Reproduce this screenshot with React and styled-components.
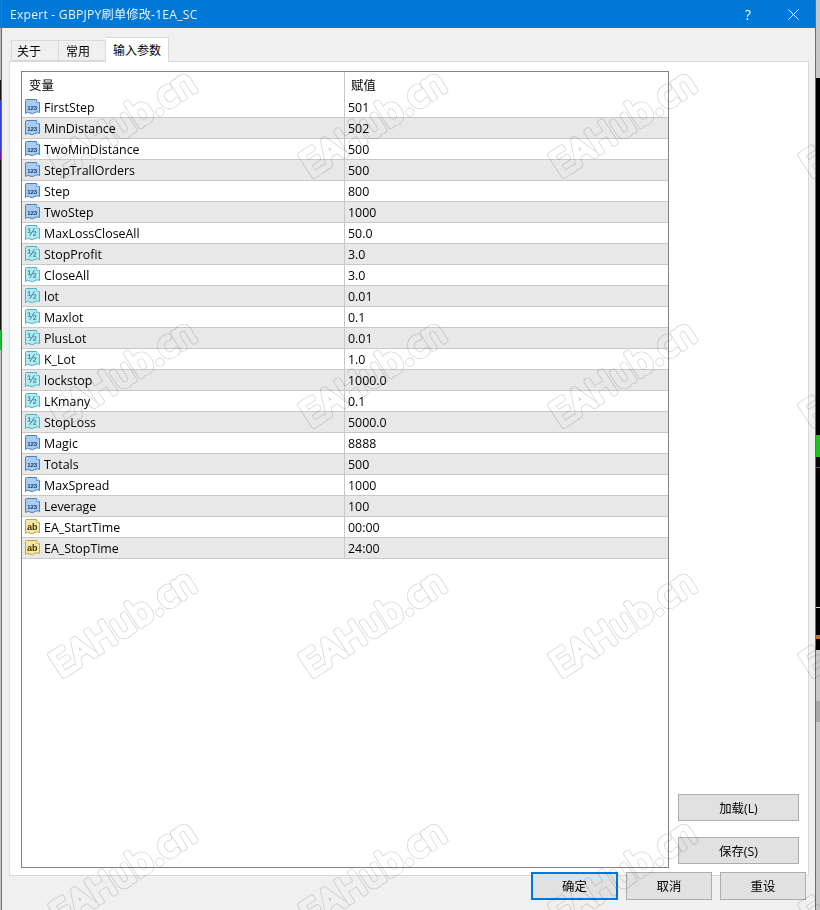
import React from 'react';
import styled, { createGlobalStyle } from 'styled-components';

const GlobalStyle = createGlobalStyle`
  html, body {
    margin: 0;
    padding: 0;
    width: 820px;
    height: 910px;
    overflow: hidden;
    background: #c8c8c8;
  }
  * {
    box-sizing: border-box;
  }
`;

const Screen = styled.div`
  position: relative;
  display: flex;
  width: 820px;
  height: 910px;
  overflow: hidden;
  font-family: "Open Sans", "Noto Sans CJK SC", sans-serif;
  font-size: 12.4px;
  color: #000;
`;

const LeftEdge = styled.div`
  width: 1px;
  flex: none;
  background: linear-gradient(
    #0078d7 0 28px,
    #b8b8b8 28px 80px,
    #111 80px 100px,
    #2b3fd0 100px 150px,
    #6a1fa0 150px 160px,
    #111 160px 330px,
    #18c030 330px 350px,
    #c8c8c8 350px
  );
`;

const Window = styled.div`
  width: 815px;
  flex: none;
  display: flex;
  flex-direction: column;
  background: #f0f0f0;
  border-left: 1px solid #2b7cc4;
  border-right: 1px solid #2b7cc4;
`;

const TitleBar = styled.div`
  height: 28px;
  flex: none;
  display: flex;
  align-items: center;
  padding-left: 8px;
  background: #0078d7;
  color: #e8f2fb;
  font-size: 12.2px;
`;

const Title = styled.span`
  flex: 1;
  letter-spacing: 0.2px;
`;

const Help = styled.span`
  width: 12px;
  margin-right: 34px;
  color: #fff;
  font-size: 14px;
  text-align: center;
`;

const CloseIcon = styled.svg`
  width: 11px;
  height: 11px;
  margin-right: 16px;
`;

const Body = styled.div`
  flex: 1;
  display: flex;
  flex-direction: column;
  padding: 9px 0 0 7px;
`;

const Tabs = styled.div`
  height: 24px;
  flex: none;
  display: flex;
  align-items: flex-end;
  padding-left: 2px;
  font-size: 12px;
`;

const Tab = styled.div`
  display: flex;
  align-items: center;
  width: ${p => p.$width}px;
  height: ${p => (p.$active ? 25 : 21)}px;
  margin-bottom: ${p => (p.$active ? -1 : 0)}px;
  padding-left: ${p => (p.$joined ? 7 : 5)}px;
  position: relative;
  z-index: ${p => (p.$active ? 1 : 0)};
  background: ${p => (p.$active ? '#fff' : '#f0f0f0')};
  border: 1px solid #d9d9d9;
  border-bottom: ${p => (p.$active ? 'none' : '1px solid #d9d9d9')};
  border-left: ${p => (p.$joined ? 'none' : '1px solid #d9d9d9')};
`;

const Panel = styled.div`
  width: 800px;
  height: 815px;
  flex: none;
  display: flex;
  gap: 9px;
  padding: 9px 9px 7px 11px;
  background: #fff;
  border: 1px solid #d9d9d9;
`;

const Grid = styled.div`
  width: 648px;
  flex: none;
  border: 1px solid #82828a;
`;

const Row = styled.div`
  display: grid;
  grid-template-columns: 323px 1fr;
  height: ${p => (p.$header ? 25 : 21)}px;
  background: ${p => (p.$shaded ? '#e8e8e8' : '#fff')};
  border-bottom: ${p => (p.$header ? 'none' : '1px solid #c8c8c8')};
`;

const NameCell = styled.div`
  display: flex;
  align-items: center;
  gap: 3px;
  padding-left: ${p => (p.$header ? 7 : 3)}px;
  border-right: 1px solid #c8c8c8;
`;

const ValueCell = styled.div`
  display: flex;
  align-items: center;
  padding-left: ${p => (p.$header ? 6 : 3)}px;
`;

const Side = styled.div`
  flex: 1;
  display: flex;
  flex-direction: column;
  justify-content: flex-end;
  gap: 16px;
  padding-bottom: 4px;
`;

const Button = styled.div`
  display: flex;
  align-items: center;
  justify-content: center;
  background: #e1e1e1;
  border: 1px solid #adadad;
`;

const SideButton = styled(Button)`
  width: 121px;
  height: 27px;
`;

const Footer = styled.div`
  display: flex;
  justify-content: flex-end;
  gap: 8px;
  margin-top: -4px;
  padding-right: 9px;
  position: relative;
`;

const FooterButton = styled(Button)`
  width: ${p => (p.$primary ? 87 : 86)}px;
  height: 28px;
  border: ${p => (p.$primary ? '2px solid #0078d7' : '1px solid #adadad')};
`;

const RightEdge = styled.div`
  flex: 1;
  display: flex;
  flex-direction: column;
`;

const Backdrop = styled.div`
  height: ${p => p.$height}px;
  flex: none;
  background: ${p => p.$color};
`;

// sits over everything; multiply keeps the hollow letters see-through
const Watermarks = styled.svg`
  position: absolute;
  inset: 0;
  width: 820px;
  height: 910px;
  pointer-events: none;
  mix-blend-mode: multiply;
`;

const MarkText = styled.text`
  font-family: "Open Sans", sans-serif;
  font-size: 35px;
  font-weight: 300;
  letter-spacing: 1.5px;
  text-anchor: middle;
  fill: #fff;
  stroke-linejoin: round;
  stroke-linecap: round;
`;

const ICONS = {
  int: { fill: '#a8cdf0', edge: '#4a80c0', text: '#123a70', label: '123', size: 6, weight: 700 },
  real: { fill: '#b0eaf2', edge: '#50b0c4', text: '#1a6478', label: '½', size: 11, weight: 400 },
  str: { fill: '#f6e7a4', edge: '#bfa648', text: '#3a3000', label: 'ab', size: 9, weight: 700 },
};

const TypeIcon = ({ type }) => {
  const icon = ICONS[type];
  return (
    <svg width="16" height="16" viewBox="0 0 16 16" style={{ flex: 'none' }}>
      <path
        d="M0.5 1.5 Q0.5 0.5 1.5 0.5 H11.5 L14.5 3.5 V13.5 Q12.5 12 10 13.5 Q7.5 15.5 5 14 Q2.5 12.5 0.5 14.5 Z"
        fill={icon.fill}
        stroke={icon.edge}
      />
      <path d="M11.5 0.5 V3.5 H14.5" fill="#fff" stroke={icon.edge} strokeWidth="0.7" />
      <text
        x="7.2"
        y="10.6"
        textAnchor="middle"
        fontFamily="'Liberation Sans', sans-serif"
        fontWeight={icon.weight}
        fontSize={icon.size}
        fill={icon.text}
      >
        {icon.label}
      </text>
    </svg>
  );
};

const PARAMS = [
  ['int', 'FirstStep', '501'],
  ['int', 'MinDistance', '502'],
  ['int', 'TwoMinDistance', '500'],
  ['int', 'StepTrallOrders', '500'],
  ['int', 'Step', '800'],
  ['int', 'TwoStep', '1000'],
  ['real', 'MaxLossCloseAll', '50.0'],
  ['real', 'StopProfit', '3.0'],
  ['real', 'CloseAll', '3.0'],
  ['real', 'lot', '0.01'],
  ['real', 'Maxlot', '0.1'],
  ['real', 'PlusLot', '0.01'],
  ['real', 'K_Lot', '1.0'],
  ['real', 'lockstop', '1000.0'],
  ['real', 'LKmany', '0.1'],
  ['real', 'StopLoss', '5000.0'],
  ['int', 'Magic', '8888'],
  ['int', 'Totals', '500'],
  ['int', 'MaxSpread', '1000'],
  ['int', 'Leverage', '100'],
  ['str', 'EA_StartTime', '00:00'],
  ['str', 'EA_StopTime', '24:00'],
];

const MARK_X = [130, 380, 630, 880];
const MARK_Y = [133, 383, 633, 883];

const STRIP = [
  [78, '#c8c8c8'],
  [357, '#000'],
  [22, '#18c818'],
  [10, '#000'],
  [1, '#d02020'],
  [139, '#000'],
  [1, '#d8d8d8'],
  [27, '#000'],
  [4, '#c07030'],
  [11, '#000'],
  [51, '#c8c8c8'],
  [21, '#a8a8a8'],
  [188, '#c8c8c8'],
];

const App = () => (
  <Screen>
    <GlobalStyle />
    <LeftEdge />
    <Window>
      <TitleBar>
        <Title>Expert - GBPJPY刷单修改-1EA_SC</Title>
        <Help>?</Help>
        <CloseIcon viewBox="0 0 11 11">
          <path d="M0.5 0.5 L10.5 10.5 M10.5 0.5 L0.5 10.5" stroke="#fff" strokeWidth="1" />
        </CloseIcon>
      </TitleBar>
      <Body>
        <Tabs>
          <Tab $width={48}>关于</Tab>
          <Tab $width={47} $joined>常用</Tab>
          <Tab $width={63} $active $joined>输入参数</Tab>
        </Tabs>
        <Panel>
          <Grid>
            <Row $header>
              <NameCell $header>变量</NameCell>
              <ValueCell $header>赋值</ValueCell>
            </Row>
            {PARAMS.map(([type, name, value], index) => (
              <Row key={name} $shaded={index % 2 === 1}>
                <NameCell>
                  <TypeIcon type={type} />
                  {name}
                </NameCell>
                <ValueCell>{value}</ValueCell>
              </Row>
            ))}
          </Grid>
          <Side>
            <SideButton>加载(L)</SideButton>
            <SideButton>保存(S)</SideButton>
          </Side>
        </Panel>
        <Footer>
          <FooterButton $primary>确定</FooterButton>
          <FooterButton>取消</FooterButton>
          <FooterButton>重设</FooterButton>
        </Footer>
      </Body>
    </Window>
    <RightEdge>
      {STRIP.map(([height, color], index) => (
        <Backdrop key={index} $height={height} $color={color} />
      ))}
    </RightEdge>
    <Watermarks viewBox="0 0 820 910">
      <defs>
        <MarkText id="mark" x="0" y="0">EAHub.cn</MarkText>
      </defs>
      {MARK_Y.map(y =>
        MARK_X.map(x => (
          <g key={`${x}-${y}`} transform={`translate(${x} ${y}) rotate(-33)`}>
            <use href="#mark" stroke="#d6d6d6" strokeWidth="6" />
            <use href="#mark" stroke="#fff" strokeWidth="4.4" />
          </g>
        )),
      )}
    </Watermarks>
  </Screen>
);

export default App;
